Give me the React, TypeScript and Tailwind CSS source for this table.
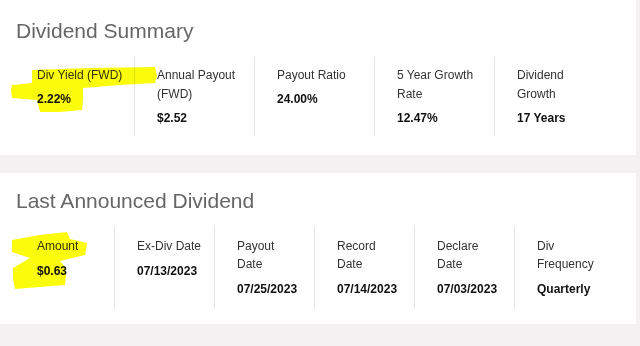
import React from "react";

interface Stat {
  label: string;
  value: string;
}

const summary: Stat[] = [
  { label: "Div Yield (FWD)", value: "2.22%" },
  { label: "Annual Payout (FWD)", value: "$2.52" },
  { label: "Payout Ratio", value: "24.00%" },
  { label: "5 Year Growth Rate", value: "12.47%" },
  { label: "Dividend Growth", value: "17 Years" },
];

const announced: Stat[] = [
  { label: "Amount", value: "$0.63" },
  { label: "Ex-Div Date", value: "07/13/2023" },
  { label: "Payout Date", value: "07/25/2023" },
  { label: "Record Date", value: "07/14/2023" },
  { label: "Declare Date", value: "07/03/2023" },
  { label: "Div Frequency", value: "Quarterly" },
];

export default function App() {
  return (
    <div
      className="relative w-[640px] h-[346px] overflow-hidden bg-[#f3f1f1]"
      style={{ fontFamily: '"Liberation Sans", Arial, sans-serif' }}
    >
      {/* Dividend Summary */}
      <div className="w-[636px] bg-white pt-[17px] pb-[19px]">
        <h2 className="px-4 text-[21px] leading-[28px] text-[#666666]">Dividend Summary</h2>
        <div className="mt-[12px] flex pl-[15px]">
          {summary.map((s, i) => (
            <div
              key={s.label}
              className={
                "w-[120px] pl-[22px] pt-[9px] pb-[8px] " +
                (i < summary.length - 1 ? "border-r border-[#e4e4e4]" : "")
              }
            >
              <div className="w-[87px] text-[12px] leading-[19px] text-[#333333]">{s.label}</div>
              <div className="mt-[5px] text-[12px] leading-[19px] font-bold text-[#111111]">{s.value}</div>
            </div>
          ))}
        </div>
      </div>

      {/* Last Announced Dividend */}
      <div className="mt-[18px] w-[636px] bg-white pt-[14px] pb-[15px]">
        <h2 className="px-4 text-[21px] leading-[28px] text-[#666666]">Last Announced Dividend</h2>
        <div className="mt-[11px] flex pl-[15px]">
          {announced.map((s, i) => (
            <div
              key={s.label}
              className={
                "w-[100px] pl-[22px] pt-[11px] pb-[10px] " +
                (i < announced.length - 1 ? "border-r border-[#e4e4e4]" : "")
              }
            >
              <div className="w-[65px] text-[12px] leading-[18px] text-[#333333]">{s.label}</div>
              <div className="mt-[7px] text-[12px] leading-[19px] font-bold text-[#111111]">{s.value}</div>
            </div>
          ))}
        </div>
      </div>

      {/* highlighter marks */}
      <svg
        className="pointer-events-none absolute inset-0 mix-blend-multiply"
        width="640"
        height="346"
        viewBox="0 0 640 346"
      >
        <polygon
          fill="#fbfb0c"
          points="32,70 90,68 155,67 157,76 155,83 120,85 83,88 83,100 82,110 60,112 40,112 37,100 12,98 11,90 12,85 32,83"
        />
        <polygon
          fill="#fbfb0c"
          points="12,240 40,235 67,232 70,239 87,243 86,250 85,255 60,261 65,267 66,276 65,285 40,287 15,289 13,278 13,268 30,258 12,252"
        />
      </svg>
    </div>
  );
}
